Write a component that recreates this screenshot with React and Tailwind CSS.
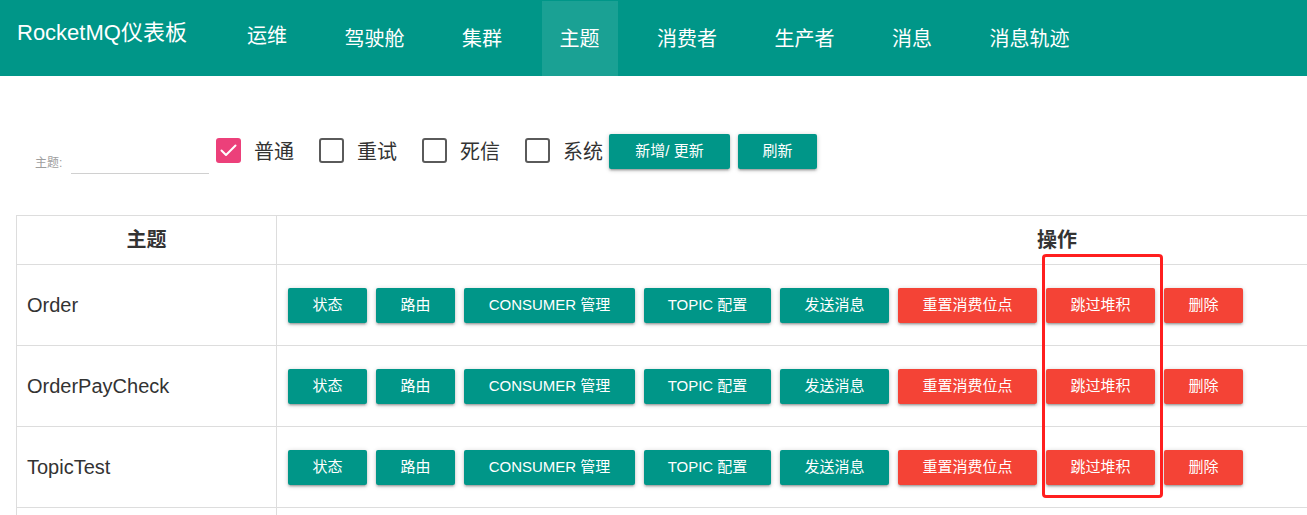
import React from 'react';

const font = { fontFamily: '"Liberation Sans", "Noto Sans CJK SC", sans-serif' };

const navItems = [
  { label: '运维', pt: 'pt-[23px]' },
  { label: '驾驶舱', pt: 'pt-[26px]' },
  { label: '集群', pt: 'pt-[26px]' },
  { label: '主题', pt: 'pt-[26px]', active: true },
  { label: '消费者', pt: 'pt-[26px]' },
  { label: '生产者', pt: 'pt-[26px]' },
  { label: '消息', pt: 'pt-[26px]' },
  { label: '消息轨迹', pt: 'pt-[26px]' },
];

const actions = [
  { label: '状态', w: 'w-[79px]' },
  { label: '路由', w: 'w-[79px]' },
  { label: 'CONSUMER 管理', w: 'w-[171px]' },
  { label: 'TOPIC 配置', w: 'w-[127px]' },
  { label: '发送消息', w: 'w-[109px]' },
  { label: '重置消费位点', w: 'w-[139px]', red: true },
  { label: '跳过堆积', w: 'w-[109px]', red: true },
  { label: '删除', w: 'w-[79px]', red: true },
];

const topics = ['Order', 'OrderPayCheck', 'TopicTest'];

const shadow = 'shadow-[0_2px_2px_0_rgba(0,0,0,0.14),0_3px_1px_-2px_rgba(0,0,0,0.12),0_1px_5px_0_rgba(0,0,0,0.2)]';

function Btn({ label, w, red }) {
  return (
    <button
      className={`${w} h-[35px] shrink-0 rounded-[2px] text-[15px] text-white flex items-center justify-center ${shadow} ${red ? 'bg-[#f44336]' : 'bg-[#009688]'}`}
    >
      {label}
    </button>
  );
}

function Check({ label, checked, last }) {
  return (
    <div className={`flex items-center h-[25px] mt-[4px] ${last ? '' : 'mr-[25px]'}`}>
      {checked ? (
        <span className="w-[25px] h-[25px] rounded-[3px] bg-[#ec407a] flex items-center justify-center">
          <svg width="17" height="13" viewBox="0 0 17 13" fill="none">
            <path d="M1.5 6.5 L6 11 L15.5 1.5" stroke="white" strokeWidth="2" strokeLinecap="round" strokeLinejoin="round" />
          </svg>
        </span>
      ) : (
        <span className="w-[25px] h-[25px] rounded-[3px] border-2 border-[#5a5a5a]" />
      )}
      <span className="ml-[13px] pt-[3px] text-[20px] leading-none text-[#333]">{label}</span>
    </div>
  );
}

export default function App() {
  return (
    <div style={font} className="w-[1307px] h-[515px] overflow-hidden bg-white">
      <header className="h-[76px] bg-[#009688] flex text-white">
        <div className="pl-[17px] pt-[19px] text-[22px] leading-[28px] w-[229px] shrink-0">RocketMQ仪表板</div>
        <nav className="flex">
          {navItems.map((n, i) => (
            <div
              key={n.label}
              className={`${n.pt} px-[18px] mt-[1px] h-[75px] text-[20px] leading-[24px] ${i > 0 ? 'ml-[21.5px]' : ''} ${n.active ? 'bg-white/10' : ''}`}
            >
              {n.label}
            </div>
          ))}
        </nav>
      </header>

      <div className="flex items-start pt-[58px] pl-[35px]">
        <div className="flex items-end mt-[22px] h-[18px] mr-[7px]">
          <span className="w-[36px] text-[12px] leading-none text-[#9e9e9e] mb-[5px]">主题:</span>
          <span className="w-[138px] h-[18px] border-b border-[#d0d0d0]" />
        </div>
        <Check label="普通" checked />
        <Check label="重试" />
        <Check label="死信" />
        <Check label="系统" last />
        <div className="flex gap-[8px] ml-[6px]">
          <Btn label="新增/ 更新" w="w-[121px]" />
          <Btn label="刷新" w="w-[79px]" />
        </div>
      </div>

      <div className="relative ml-[16px] mt-[41px] w-[1822px]">
        <table className="w-[1822px] border-collapse text-[#333]">
          <thead>
            <tr className="h-[49px]">
              <th className="w-[260px] border border-[#ddd] text-[20px] font-bold text-center align-middle">主题</th>
              <th className="border border-[#ddd] text-[20px] font-bold text-center align-middle">操作</th>
            </tr>
          </thead>
          <tbody>
            {topics.map((t) => (
              <tr key={t} className="h-[81px]">
                <td className="border border-[#ddd] pl-[10px] text-[20px] align-middle">{t}</td>
                <td className="border border-[#ddd] pl-[11px] pt-[1px] align-middle">
                  <div className="flex gap-[9px]">
                    {actions.map((a) => (
                      <Btn key={a.label} {...a} />
                    ))}
                  </div>
                </td>
              </tr>
            ))}
            <tr className="h-[81px]">
              <td className="border border-[#ddd]" />
              <td className="border border-[#ddd]" />
            </tr>
          </tbody>
        </table>
        <div className="absolute left-[1026px] top-[39px] w-[121px] h-[244px] border-[3px] border-[#ff1f1f] rounded-[4px]" />
      </div>
    </div>
  );
}
